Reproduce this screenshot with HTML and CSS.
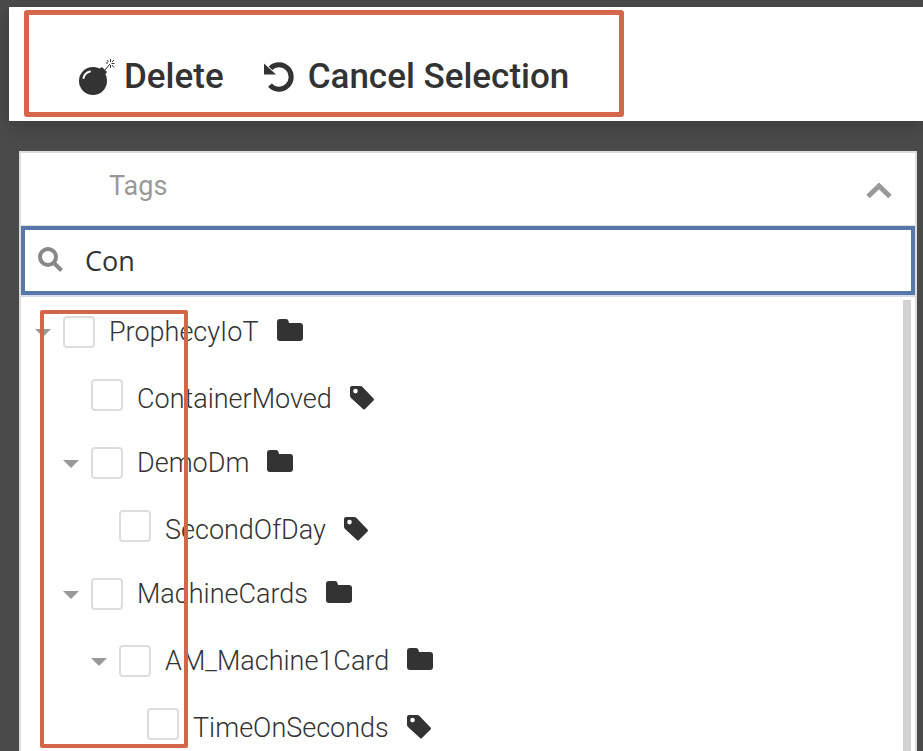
FILE: index.html
```html
<!DOCTYPE html>
<html lang="en">

<head>
  <meta charset="UTF-8">
  <meta name="viewport" content="width=device-width, initial-scale=1.0">
  <title>Tags</title>
  <link rel="stylesheet" href="styles.css">
</head>

<body>
  <!-- shared icons -->
  <svg class="sprite" aria-hidden="true">
    <symbol id="folder" viewBox="0 0 26 22">
      <path d="M3 0h6q2 0 2.500 2l.5 2h11q3 0 3 3v12q0 3-3 3H3q-3 0-3-3V3q0-3 3-3z" />
    </symbol>
    <symbol id="tag" viewBox="0 0 24 24">
      <path fill-rule="evenodd" d="M2 0h8q1.500 0 2.500 1L23.500 12.500q1 1 0 2l-8.500 8.500q-1 1-2 0L1 12Q0 11 0 9.500V2q0-2 2-2zM5.500 2.800a2.300 2.300 0 1 0 0 4.600a2.300 2.300 0 1 0 0-4.600z" />
    </symbol>
  </svg>

  <header class="toolbar">
    <div class="actions">
      <button type="button" class="action">
        <svg class="icon-bomb" viewBox="0 0 36 36">
          <circle cx="14" cy="22" r="14" />
          <path d="M20 10l3-2 5 5-3 4z" />
          <path class="line" d="M26 11l5-6M31.500 0v3M35.500 4.500h-3M28 1l1.500 2M35 1l-2 2M33 6l2 2.500M31.500 6v3M27 4h2" />
          <path class="shine" d="M4.500 19q1-5 6.500-6.500" />
        </svg>
        Delete
      </button>
      <button type="button" class="action">
        <svg class="icon-undo" viewBox="0 0 30 30">
          <path class="arc" d="M6.500 6.200A12.200 12.200 0 1 1 5.900 23.100" />
          <path d="M0 1.500l12 11H0z" />
        </svg>
        Cancel Selection
      </button>
    </div>
  </header>

  <main class="panel">
    <div class="panel-header">
      <h1>Tags</h1>
      <button type="button" class="collapse" aria-label="Collapse">
        <svg viewBox="0 0 26 17">
          <path d="M2 14.500L13 4l11 10.500" />
        </svg>
      </button>
    </div>

    <div class="search">
      <svg class="icon-search" viewBox="0 0 25 25">
        <circle cx="10" cy="10" r="8" />
        <path d="M15.500 15.500l8 8" />
      </svg>
      <input type="text" value="Con" aria-label="Search tags">
    </div>

    <div class="tree-area">
      <ul class="tree">
        <li>
          <div class="row">
            <button type="button" class="toggle" aria-label="Toggle"></button>
            <input type="checkbox" id="prophecy">
            <label for="prophecy">ProphecyIoT</label>
            <svg class="icon-folder"><use href="#folder" /></svg>
          </div>
          <ul>
            <li>
              <div class="row leaf">
                <input type="checkbox" id="container-moved">
                <label for="container-moved">ContainerMoved</label>
                <svg class="icon-tag"><use href="#tag" /></svg>
              </div>
            </li>
            <li>
              <div class="row">
                <button type="button" class="toggle" aria-label="Toggle"></button>
                <input type="checkbox" id="demo-dm">
                <label for="demo-dm">DemoDm</label>
                <svg class="icon-folder"><use href="#folder" /></svg>
              </div>
              <ul>
                <li>
                  <div class="row leaf">
                    <input type="checkbox" id="second-of-day">
                    <label for="second-of-day">SecondOfDay</label>
                    <svg class="icon-tag"><use href="#tag" /></svg>
                  </div>
                </li>
              </ul>
            </li>
            <li>
              <div class="row">
                <button type="button" class="toggle" aria-label="Toggle"></button>
                <input type="checkbox" id="machine-cards">
                <label for="machine-cards">MachineCards</label>
                <svg class="icon-folder"><use href="#folder" /></svg>
              </div>
              <ul>
                <li>
                  <div class="row">
                    <button type="button" class="toggle" aria-label="Toggle"></button>
                    <input type="checkbox" id="machine-1">
                    <label for="machine-1">AM_Machine1Card</label>
                    <svg class="icon-folder"><use href="#folder" /></svg>
                  </div>
                  <ul>
                    <li>
                      <div class="row leaf">
                        <input type="checkbox" id="time-on">
                        <label for="time-on">TimeOnSeconds</label>
                        <svg class="icon-tag"><use href="#tag" /></svg>
                      </div>
                    </li>
                  </ul>
                </li>
              </ul>
            </li>
          </ul>
        </li>
      </ul>
      <div class="scrollbar"></div>
      <div class="highlight"></div>
    </div>
  </main>
</body>

</html>
```

FILE: styles.css
```css
* {
  box-sizing: border-box;
}

body {
  background-color: #4a4a4a;
  color: #333;
  font-family: Roboto, sans-serif;
  display: flex;
  flex-direction: column;
  height: 100vh;
  margin: 0;
  overflow: hidden;
}

button {
  background: none;
  border: none;
  color: inherit;
  font-family: inherit;
  padding: 0;
  cursor: pointer;
}

svg {
  fill: #333;
  flex-shrink: 0;
}

.sprite {
  position: absolute;
  width: 0;
  height: 0;
}

/* toolbar */
.toolbar {
  background-color: #fff;
  box-shadow: 0 4px 16px rgba(0, 0, 0, 0.2);
  margin: 7px 0 0 9px;
  padding: 3px 15px 4px;
  display: flex;
}

.actions {
  border: 5px solid #d4674a;
  border-radius: 3px;
  height: 107px;
  padding: 26px 50px 0;
  display: flex;
  align-items: center;
  gap: 40px;
}

.action {
  font-size: 35px;
  font-weight: 500;
  line-height: 44px;
  display: flex;
  align-items: center;
  gap: 9px;
  white-space: nowrap;
}

.icon-bomb {
  width: 36px;
  height: 36px;
}

.icon-bomb .line {
  fill: none;
  stroke: #333;
  stroke-width: 1;
}

.icon-bomb .shine {
  fill: none;
  stroke: #fff;
  stroke-width: 2;
  stroke-linecap: round;
}

.icon-undo {
  width: 30px;
  height: 30px;
  margin-right: 5px;
}

.icon-undo .arc {
  fill: none;
  stroke: #333;
  stroke-width: 5;
}

/* panel */
.panel {
  background-color: #fff;
  border: 2px solid #ddd;
  border-bottom: none;
  margin: 30px 6px 0 19px;
  flex: 1;
  min-height: 0;
  display: flex;
  flex-direction: column;
}

.panel-header {
  border-bottom: 1px solid #ddd;
  height: 73px;
  padding: 0 23px 6px 88px;
  display: flex;
  align-items: center;
  justify-content: space-between;
  flex-shrink: 0;
}

h1 {
  color: #999;
  font-size: 27px;
  font-weight: 400;
  margin: 0;
}

.collapse {
  padding-top: 8px;
}

.collapse svg {
  display: block;
  width: 26px;
  height: 17px;
  fill: none;
  stroke: #999;
  stroke-width: 5;
}

.search {
  border: 4px solid #5878ad;
  box-shadow: 0 2px 0 #d8dfeb;
  height: 69px;
  padding: 0 13px;
  display: flex;
  align-items: center;
  gap: 22px;
  flex-shrink: 0;
}

.icon-search {
  width: 25px;
  height: 25px;
  margin-bottom: 3px;
  fill: none;
  stroke: #888;
  stroke-width: 4;
}

.search input {
  border: none;
  outline: none;
  background: none;
  color: #333;
  font-family: "Open Sans", sans-serif;
  font-size: 27px;
  padding: 0;
  flex: 1;
  min-width: 0;
}

/* tag tree */
.tree-area {
  position: relative;
  padding: 5px 4px 0 14px;
  flex: 1;
  min-height: 0;
  display: flex;
}

ul {
  list-style: none;
  margin: 0;
  padding: 0 0 0 28px;
}

.tree {
  padding: 0;
  flex: 1;
}

.row {
  height: 67px;
  display: flex;
  align-items: flex-start;
}

.row.leaf {
  height: 64px;
  padding-left: 28px;
}

.toggle {
  width: 28px;
  height: 66px;
  display: flex;
  align-items: center;
}

.toggle::before {
  content: "";
  border: 8px solid transparent;
  border-top-color: #999;
  border-bottom: none;
}

.row input {
  appearance: none;
  border: 2px solid #ddd;
  border-radius: 4px;
  background-color: #fff;
  width: 32px;
  height: 32px;
  margin: 16px 14px 0 0;
}

.row.leaf input {
  margin-top: 12px;
}

label {
  font-size: 27px;
  font-weight: 300;
  line-height: 64px;
  margin-right: 18px;
}

.icon-folder {
  width: 26px;
  height: 22px;
  margin-top: 19px;
}

.icon-tag {
  width: 24px;
  height: 24px;
  margin-top: 19px;
}

.scrollbar {
  background-color: #d2d2d2;
  width: 8px;
}

.highlight {
  position: absolute;
  left: 19px;
  top: 15px;
  bottom: 3px;
  width: 148px;
  border: 4px solid #d4674a;
  border-radius: 2px;
  pointer-events: none;
}
```
